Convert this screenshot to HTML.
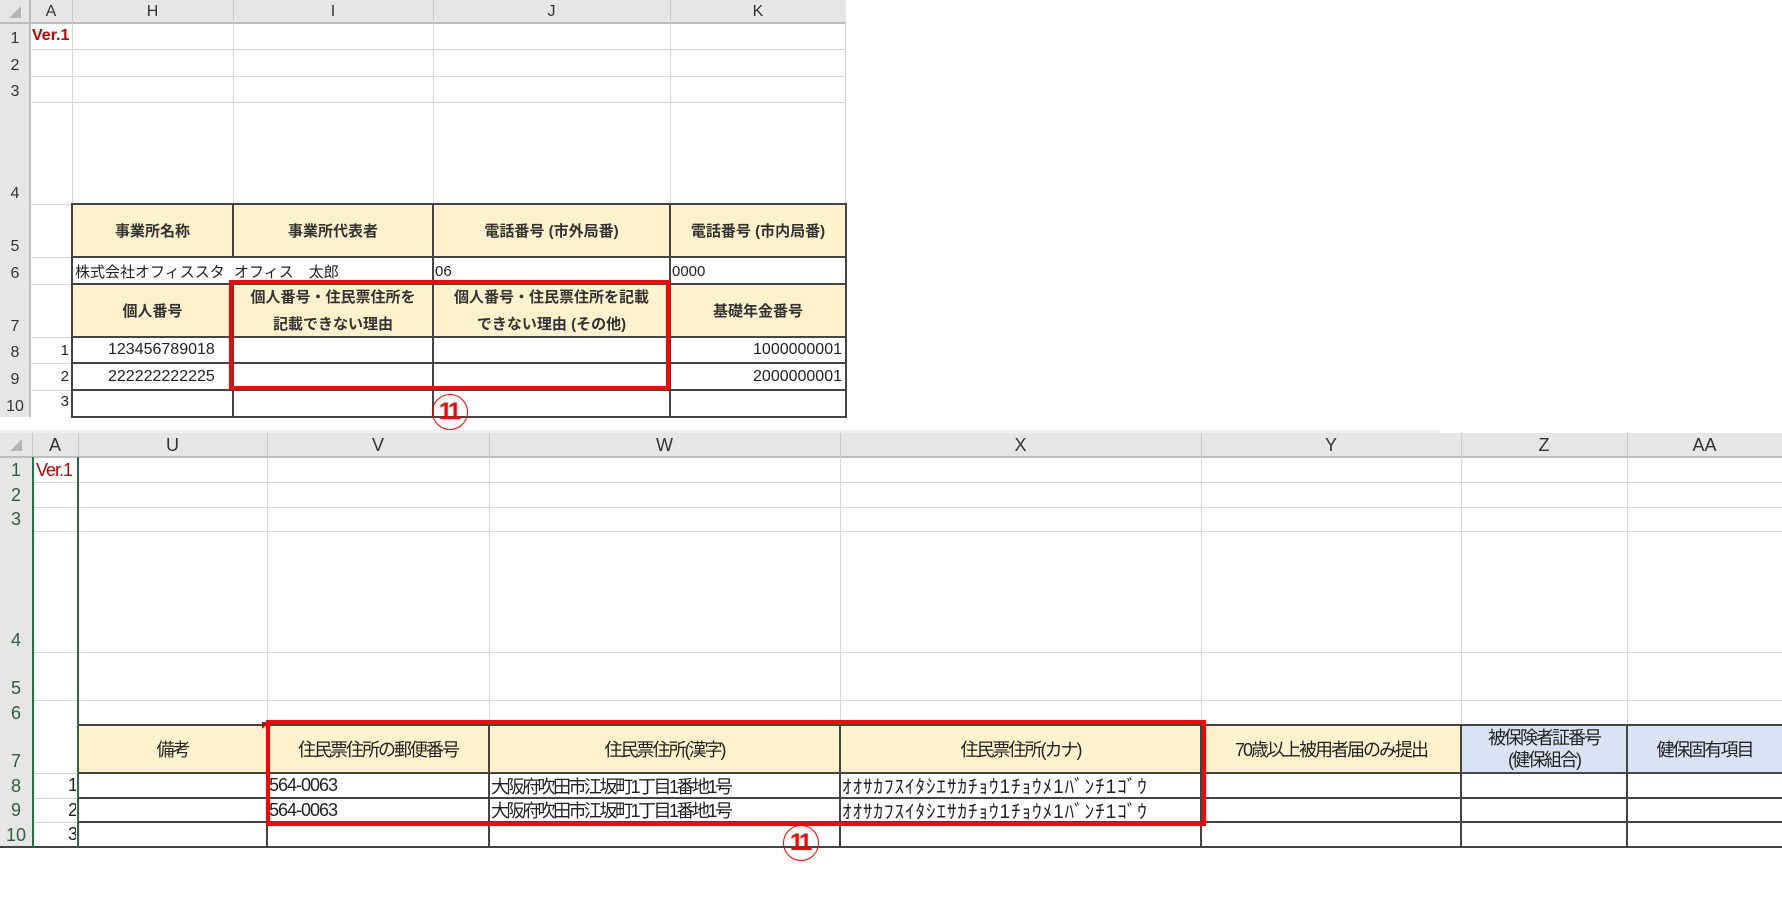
<!DOCTYPE html>
<html><head><meta charset="utf-8"><style>
*{margin:0;padding:0;box-sizing:border-box}
body{width:1782px;height:897px;position:relative;background:#fff;overflow:hidden;font-family:"Liberation Sans","Noto Sans CJK JP",sans-serif;color:#222}
div{position:absolute}
.g{background:#e6e6e6}
.hl{height:1px;background:#d6d6d6}
.vl{width:1px;background:#d6d6d6}
.dh{height:2px;background:#444}
.dv{width:2px;background:#444}
.y{background:#fff2cc}
.b{background:#dae3f3}
.c{display:flex;align-items:center;justify-content:center;text-align:center;white-space:nowrap;overflow:hidden}
.l{display:flex;align-items:center;white-space:nowrap;overflow:hidden}
.r{display:flex;align-items:center;justify-content:flex-end;white-space:nowrap;overflow:hidden}
.ch{font-size:16px;color:#333}
.rh{font-size:16px;color:#333;display:flex;align-items:flex-end;justify-content:center;padding-bottom:1px}
.t1{font-size:15px;font-weight:bold;color:#333}
.t1n{font-size:15px;color:#222}
.t2{font-size:18px;color:#222;letter-spacing:-2px}
.red{border:4px solid #f00}
.circ{width:36px;height:36px;border:1.5px solid #f00;border-radius:50%;color:#f00;font-weight:bold;font-size:24px;display:flex;align-items:center;justify-content:center;letter-spacing:-3px;padding-right:3px}
</style></head><body>

<!-- ===== TOP SHEET ===== -->
<div class="g" style="left:0;top:0;width:846px;height:23px"></div>
<div class="g" style="left:0;top:23px;width:30px;height:394px"></div>
<div style="left:0;top:22px;width:846px;height:2px;background:#bdbdbd"></div>
<div style="left:29px;top:0;width:2px;height:417px;background:#bdbdbd"></div>
<div style="left:0;top:0;width:30px;height:23px" class="c"><svg width="14" height="14"><polygon points="13,1 13,13 1,13" fill="#b5b5b5"/></svg></div>
<div class="c ch" style="left:30px;top:0;width:42px;height:23px">A</div>
<div class="c ch" style="left:72px;top:0;width:161px;height:23px">H</div>
<div class="c ch" style="left:233px;top:0;width:200px;height:23px">I</div>
<div class="c ch" style="left:433px;top:0;width:237px;height:23px">J</div>
<div class="c ch" style="left:670px;top:0;width:176px;height:23px">K</div>
<div class="vl" style="left:72px;top:0;height:23px;background:#c8c8c8"></div>
<div class="vl" style="left:233px;top:0;height:23px;background:#c8c8c8"></div>
<div class="vl" style="left:433px;top:0;height:23px;background:#c8c8c8"></div>
<div class="vl" style="left:670px;top:0;height:23px;background:#c8c8c8"></div>
<div class="rh" style="left:0;top:23px;width:30px;height:26px">1</div>
<div class="rh" style="left:0;top:49px;width:30px;height:27px">2</div>
<div class="rh" style="left:0;top:76px;width:30px;height:26px">3</div>
<div class="rh" style="left:0;top:102px;width:30px;height:102px">4</div>
<div class="rh" style="left:0;top:204px;width:30px;height:53px">5</div>
<div class="rh" style="left:0;top:257px;width:30px;height:27px">6</div>
<div class="rh" style="left:0;top:284px;width:30px;height:53px">7</div>
<div class="rh" style="left:0;top:337px;width:30px;height:26px">8</div>
<div class="rh" style="left:0;top:363px;width:30px;height:27px">9</div>
<div class="rh" style="left:0;top:390px;width:30px;height:27px">10</div>
<div class="hl" style="left:30px;top:49px;width:816px"></div>
<div class="hl" style="left:30px;top:76px;width:816px"></div>
<div class="hl" style="left:30px;top:102px;width:816px"></div>
<div class="hl" style="left:30px;top:204px;width:42px"></div>
<div class="hl" style="left:30px;top:257px;width:42px"></div>
<div class="hl" style="left:30px;top:284px;width:42px"></div>
<div class="hl" style="left:30px;top:337px;width:42px"></div>
<div class="hl" style="left:30px;top:363px;width:42px"></div>
<div class="hl" style="left:30px;top:390px;width:42px"></div>
<div class="vl" style="left:72px;top:23px;height:181px"></div>
<div class="vl" style="left:233px;top:23px;height:181px"></div>
<div class="vl" style="left:433px;top:23px;height:181px"></div>
<div class="vl" style="left:670px;top:23px;height:181px"></div>
<div class="vl" style="left:845px;top:23px;height:181px"></div>
<div class="y" style="left:72px;top:204px;width:774px;height:53px"></div>
<div class="y" style="left:72px;top:284px;width:774px;height:53px"></div>
<div class="dh" style="left:72px;top:203px;width:774px"></div>
<div class="dh" style="left:72px;top:256px;width:774px"></div>
<div class="dh" style="left:72px;top:283px;width:774px"></div>
<div class="dh" style="left:72px;top:336px;width:774px"></div>
<div class="dh" style="left:72px;top:362px;width:774px"></div>
<div class="dh" style="left:72px;top:389px;width:774px"></div>
<div class="dh" style="left:72px;top:416px;width:774px"></div>
<div class="dv" style="left:71px;top:203px;height:215px"></div>
<div class="dv" style="left:232px;top:203px;height:54px"></div>
<div class="dv" style="left:232px;top:283px;height:135px"></div>
<div class="dv" style="left:432px;top:203px;height:215px"></div>
<div class="dv" style="left:669px;top:203px;height:215px"></div>
<div class="dv" style="left:845px;top:203px;height:215px"></div>
<div class="l" style="left:32px;top:24px;width:40px;height:24px;color:#c00000;font-weight:bold;font-size:16px">Ver.1</div>
<div class="c t1" style="left:72px;top:204px;width:161px;height:53px">事業所名称</div>
<div class="c t1" style="left:233px;top:204px;width:200px;height:53px">事業所代表者</div>
<div class="c t1" style="left:433px;top:204px;width:237px;height:53px">電話番号 (市外局番)</div>
<div class="c t1" style="left:670px;top:204px;width:176px;height:53px">電話番号 (市内局番)</div>
<div class="l t1n" style="left:75px;top:258px;width:158px;height:26px">株式会社オフィススタ</div>
<div class="l t1n" style="left:234px;top:258px;width:198px;height:26px">オフィス　太郎</div>
<div class="l t1n" style="left:435px;top:258px;width:234px;height:26px">06</div>
<div class="l t1n" style="left:672px;top:258px;width:172px;height:26px">0000</div>
<div class="c t1" style="left:72px;top:284px;width:161px;height:53px">個人番号</div>
<div class="c t1" style="left:233px;top:284px;width:200px;height:53px;line-height:27px">個人番号・住民票住所を<br>記載できない理由</div>
<div class="c t1" style="left:433px;top:284px;width:237px;height:53px;line-height:27px">個人番号・住民票住所を記載<br>できない理由 (その他)</div>
<div class="c t1" style="left:670px;top:284px;width:176px;height:53px">基礎年金番号</div>
<div class="r t1n" style="left:30px;top:337px;width:39px;height:26px">1</div>
<div class="r t1n" style="left:30px;top:363px;width:39px;height:27px">2</div>
<div class="r t1n" style="left:30px;top:388px;width:39px;height:27px">3</div>
<div class="l t1n" style="left:108px;top:337px;width:124px;height:26px;font-size:16px">123456789018</div>
<div class="l t1n" style="left:108px;top:363px;width:124px;height:27px;font-size:16px">222222222225</div>
<div class="r t1n" style="left:670px;top:337px;width:172px;height:26px;font-size:16px">1000000001</div>
<div class="r t1n" style="left:670px;top:363px;width:172px;height:27px;font-size:16px">2000000001</div>
<div class="red" style="left:229px;top:280px;width:441px;height:110px"></div>
<div class="circ" style="left:432px;top:394px">11</div>

<!-- ===== BOTTOM SHEET ===== -->
<div style="left:0;top:430px;width:1440px;height:3px;background:#f0f0f0"></div>
<div class="g" style="left:0;top:433px;width:1782px;height:24px"></div>
<div class="g" style="left:0;top:457px;width:32px;height:390px"></div>
<div style="left:0;top:456px;width:1782px;height:2px;background:#bdbdbd"></div>
<div style="left:0;top:433px;width:32px;height:24px" class="c"><svg width="14" height="14"><polygon points="13,1 13,13 1,13" fill="#b5b5b5"/></svg></div>
<div class="c ch" style="left:32px;top:433px;width:46px;height:24px;font-size:18px">A</div>
<div class="c ch" style="left:78px;top:433px;width:189px;height:24px;font-size:18px">U</div>
<div class="c ch" style="left:267px;top:433px;width:222px;height:24px;font-size:18px">V</div>
<div class="c ch" style="left:489px;top:433px;width:351px;height:24px;font-size:18px">W</div>
<div class="c ch" style="left:840px;top:433px;width:361px;height:24px;font-size:18px">X</div>
<div class="c ch" style="left:1201px;top:433px;width:260px;height:24px;font-size:18px">Y</div>
<div class="c ch" style="left:1461px;top:433px;width:166px;height:24px;font-size:18px">Z</div>
<div class="c ch" style="left:1627px;top:433px;width:155px;height:24px;font-size:18px">AA</div>
<div class="vl" style="left:32px;top:433px;height:24px;background:#c8c8c8"></div>
<div class="vl" style="left:78px;top:433px;height:24px;background:#c8c8c8"></div>
<div class="vl" style="left:267px;top:433px;height:24px;background:#c8c8c8"></div>
<div class="vl" style="left:489px;top:433px;height:24px;background:#c8c8c8"></div>
<div class="vl" style="left:840px;top:433px;height:24px;background:#c8c8c8"></div>
<div class="vl" style="left:1201px;top:433px;height:24px;background:#c8c8c8"></div>
<div class="vl" style="left:1461px;top:433px;height:24px;background:#c8c8c8"></div>
<div class="vl" style="left:1627px;top:433px;height:24px;background:#c8c8c8"></div>
<div class="rh" style="left:0;top:457px;width:32px;height:25px;font-size:18px;color:#2f5f3f">1</div>
<div class="rh" style="left:0;top:482px;width:32px;height:25px;font-size:18px;color:#2f5f3f">2</div>
<div class="rh" style="left:0;top:507px;width:32px;height:24px;font-size:18px;color:#2f5f3f">3</div>
<div class="rh" style="left:0;top:531px;width:32px;height:121px;font-size:18px;color:#2f5f3f">4</div>
<div class="rh" style="left:0;top:652px;width:32px;height:48px;font-size:18px;color:#2f5f3f">5</div>
<div class="rh" style="left:0;top:700px;width:32px;height:25px;font-size:18px;color:#2f5f3f">6</div>
<div class="rh" style="left:0;top:725px;width:32px;height:48px;font-size:18px;color:#2f5f3f">7</div>
<div class="rh" style="left:0;top:773px;width:32px;height:25px;font-size:18px;color:#2f5f3f">8</div>
<div class="rh" style="left:0;top:798px;width:32px;height:24px;font-size:18px;color:#2f5f3f">9</div>
<div class="rh" style="left:0;top:822px;width:32px;height:25px;font-size:18px;color:#2f5f3f">10</div>
<div class="hl" style="left:32px;top:482px;width:1750px"></div>
<div class="hl" style="left:32px;top:507px;width:1750px"></div>
<div class="hl" style="left:32px;top:531px;width:1750px"></div>
<div class="hl" style="left:32px;top:652px;width:1750px"></div>
<div class="hl" style="left:32px;top:700px;width:1750px"></div>
<div class="hl" style="left:32px;top:773px;width:46px"></div>
<div class="hl" style="left:32px;top:798px;width:46px"></div>
<div class="hl" style="left:32px;top:822px;width:46px"></div>
<div class="vl" style="left:267px;top:457px;height:268px"></div>
<div class="vl" style="left:489px;top:457px;height:268px"></div>
<div class="vl" style="left:840px;top:457px;height:268px"></div>
<div class="vl" style="left:1201px;top:457px;height:268px"></div>
<div class="vl" style="left:1461px;top:457px;height:268px"></div>
<div class="vl" style="left:1627px;top:457px;height:268px"></div>
<div class="y" style="left:78px;top:725px;width:1383px;height:48px"></div>
<div class="b" style="left:1461px;top:725px;width:321px;height:48px"></div>
<div class="dh" style="left:78px;top:724px;width:1704px"></div>
<div class="dh" style="left:78px;top:772px;width:1704px"></div>
<div class="dh" style="left:78px;top:797px;width:1704px"></div>
<div class="dh" style="left:78px;top:821px;width:1704px"></div>
<div class="dh" style="left:0;top:846px;width:1782px"></div>
<div class="dv" style="left:266px;top:724px;height:123px"></div>
<div class="dv" style="left:488px;top:724px;height:123px"></div>
<div class="dv" style="left:839px;top:724px;height:123px"></div>
<div class="dv" style="left:1200px;top:724px;height:123px"></div>
<div class="dv" style="left:1460px;top:724px;height:123px"></div>
<div class="dv" style="left:1626px;top:724px;height:123px"></div>
<div style="left:32px;top:457px;width:2px;height:390px;background:#217346"></div>
<div style="left:77px;top:457px;width:2px;height:268px;background:#217346"></div>
<div style="left:77px;top:724px;width:2px;height:123px;background:#217346"></div>
<div class="l" style="left:36px;top:458px;width:42px;height:24px;color:#c00000;font-size:18px;letter-spacing:-1px">Ver.1</div>
<div class="c t2" style="left:78px;top:725px;width:189px;height:48px">備考</div>
<div class="c t2" style="left:267px;top:725px;width:222px;height:48px">住民票住所の郵便番号</div>
<div class="c t2" style="left:489px;top:725px;width:351px;height:48px">住民票住所(漢字)</div>
<div class="c t2" style="left:840px;top:725px;width:361px;height:48px">住民票住所(カナ)</div>
<div class="c t2" style="left:1201px;top:725px;width:260px;height:48px">70歳以上被用者届のみ提出</div>
<div class="c t2" style="left:1461px;top:725px;width:166px;height:48px;line-height:22px">被保険者証番号<br>(健保組合)</div>
<div class="c t2" style="left:1627px;top:725px;width:155px;height:48px">健保固有項目</div>
<div class="r t2" style="left:34px;top:773px;width:42px;height:25px">1</div>
<div class="r t2" style="left:34px;top:798px;width:42px;height:24px">2</div>
<div class="r t2" style="left:34px;top:822px;width:42px;height:25px">3</div>
<div class="l t2" style="left:269px;top:773px;width:218px;height:25px;letter-spacing:-1px">564-0063</div>
<div class="l t2" style="left:269px;top:798px;width:218px;height:24px;letter-spacing:-1px">564-0063</div>
<div class="l t2" style="left:491px;top:773px;width:347px;height:25px;letter-spacing:-2.5px">大阪府吹田市江坂町1丁目1番地1号</div>
<div class="l t2" style="left:491px;top:798px;width:347px;height:24px;letter-spacing:-2.5px">大阪府吹田市江坂町1丁目1番地1号</div>
<div class="l t2" style="left:842px;top:773px;width:357px;height:25px;font-size:19px;letter-spacing:1px">ｵｵｻｶﾌｽｲﾀｼｴｻｶﾁｮｳ1ﾁｮｳﾒ1ﾊﾞﾝﾁ1ｺﾞｳ</div>
<div class="l t2" style="left:842px;top:798px;width:357px;height:24px;font-size:19px;letter-spacing:1px">ｵｵｻｶﾌｽｲﾀｼｴｻｶﾁｮｳ1ﾁｮｳﾒ1ﾊﾞﾝﾁ1ｺﾞｳ</div>
<div style="left:262px;top:722px;width:0;height:0;border-left:7px solid #c00;border-bottom:7px solid transparent"></div>
<div class="red" style="left:266px;top:720px;width:940px;height:106px"></div>
<div class="circ" style="left:783px;top:825px">11</div>
</body></html>
